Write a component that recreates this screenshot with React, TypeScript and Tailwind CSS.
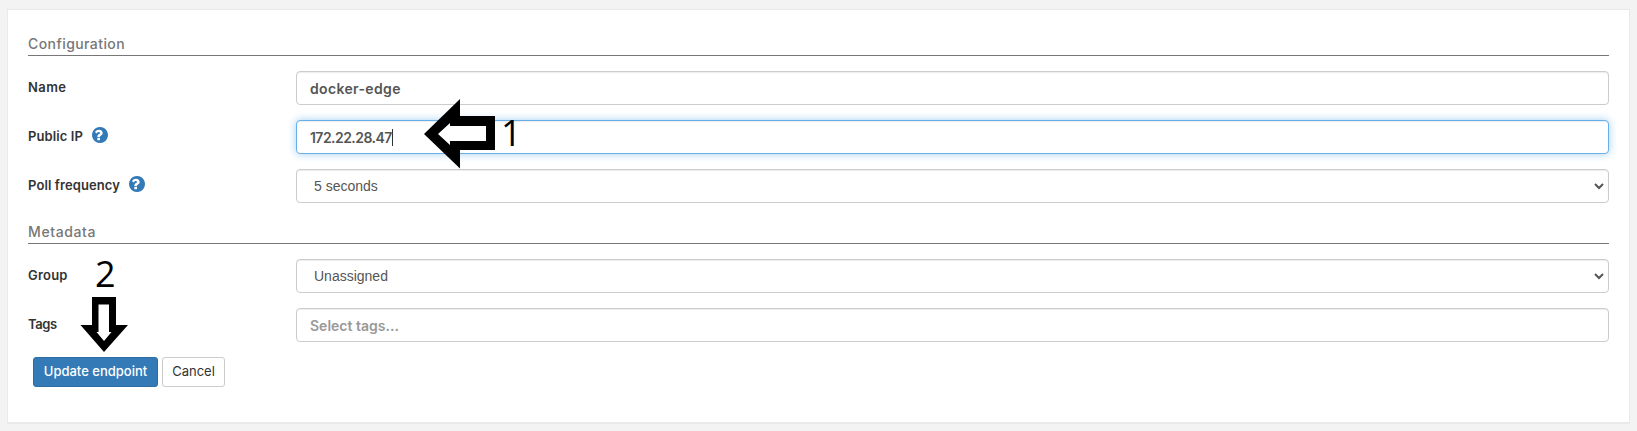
import type { ReactNode } from "react";

const field =
  "h-[34px] w-[1313px] rounded-[4px] border bg-white px-[13px] flex items-center text-[#555] shadow-[inset_0_1px_1px_rgba(0,0,0,0.075)]";

function HelpIcon() {
  return (
    <svg className="mb-[4px] ml-[9px] size-4 shrink-0" viewBox="128 128 1536 1536" fill="#337ab7">
      <path d="M896 1376v-192q0-14-9-23t-23-9h-192q-14 0-23 9t-9 23v192q0 14 9 23t23 9h192q14 0 23-9t9-23zM1152 704q0-88-55.5-163t-138.5-116t-170-41q-243 0-371 213q-15 24 8 42l132 100q7 6 19 6q16 0 25-12q53-68 86-92q34-24 86-24q48 0 85.5 26t37.5 59q0 38-20 61t-68 45q-63 28-115.5 86.5t-52.5 125.5v36q0 14 9 23t23 9h192q14 0 23-9t9-23q0-19 21.5-49.5t54.5-49.5q32-18 49-28.5t46-35t44.5-48t28-60.5t12.5-81zM1664 896q0 209-103 385.5t-279.5 279.5t-385.5 103t-385.5-103t-279.5-279.5t-103-385.5t103-385.5t279.5-279.5t385.5-103t385.5 103t279.5 279.5t103 385.5z" fillRule="evenodd" />
    </svg>
  );
}

function Heading({ children, className }: { children: ReactNode; className: string }) {
  return (
    <div className={`border-b border-[#777] text-[14px] leading-[18px] font-medium text-[#777] ${className}`}>
      {children}
    </div>
  );
}

function Row({ label, spacing, help, children }: { label: string; spacing: string; help?: boolean; children: ReactNode }) {
  return (
    <div className="flex h-[34px] justify-between">
      <div className="flex h-[33px] items-center text-[13px] font-semibold text-[#333]">
        <span className={spacing}>{label}</span>
        {help && <HelpIcon />}
      </div>
      {children}
    </div>
  );
}

function Select({ value }: { value: string }) {
  return (
    <div className={`${field} justify-between border-[#ccc] pr-[4px] pl-[17px] font-['Liberation_Sans',sans-serif] text-[14px]`}>
      <span>{value}</span>
      <svg width="10" height="7" viewBox="0 0 10 7" fill="none" stroke="#555" strokeWidth="2">
        <path d="M1 1l4 4 4-4" />
      </svg>
    </div>
  );
}

export default function App() {
  return (
    <div className="relative h-[431px] w-[1637px] overflow-hidden bg-[#f3f3f3] pt-[9px] pl-[7px] font-['Inter',sans-serif]">
      <div className="h-[415px] w-[1623px] border border-b-2 border-[#e9e9e9] bg-white pt-[25px] pr-5 pl-5">
        <Heading className="h-[21px] tracking-[0.42px]">Configuration</Heading>
        <div className="mt-[15px] flex flex-col gap-[15px]">
          <Row label="Name" spacing="tracking-[0.4px]">
            <div className={`${field} border-[#ccc] text-[14px] font-semibold tracking-[0.35px]`}>docker-edge</div>
          </Row>
          <Row label="Public IP" spacing="tracking-[0.1px]" help>
            <div className="flex h-[34px] w-[1313px] items-center rounded-[4px] border border-[#66afe9] bg-white px-[13px] text-[14px] font-semibold text-[#555] shadow-[inset_0_1px_1px_rgba(0,0,0,0.075),0_0_8px_rgba(102,175,233,0.6)]">
              <span className="tracking-[-0.55px]">172.22.28.47</span>
              <span className="h-[17px] w-px bg-[#333]" />
            </div>
          </Row>
          <Row label="Poll frequency" spacing="tracking-[0.1px]" help>
            <Select value="5 seconds" />
          </Row>
        </div>
        <Heading className="mt-5 h-[21px] tracking-[0.6px]">Metadata</Heading>
        <div className="mt-[15px] flex flex-col gap-[15px]">
          <Row label="Group" spacing="tracking-[0.2px]">
            <Select value="Unassigned" />
          </Row>
          <Row label="Tags" spacing="tracking-[-0.4px]">
            <div className={`${field} border-[#ccc] text-[14px] font-semibold tracking-[0px] text-[#999]`}>Select tags...</div>
          </Row>
        </div>
        <div className="mt-[15px] ml-[5px] flex gap-1">
          <button className="h-[30px] w-[125px] rounded-[3px] border border-[#2e6da4] bg-[#337ab7] text-[13px] font-medium whitespace-nowrap text-white">
            Update endpoint
          </button>
          <button className="h-[30px] w-[63px] rounded-[3px] border border-[#ccc] bg-white text-[13px] text-[#333]">
            Cancel
          </button>
        </div>
      </div>

      <svg className="absolute top-[99px] left-[424px]" width="72" height="70" viewBox="0 0 72 70">
        <path d="M0 35L36 0V17H71V51H36V69.5Z" fill="#000" />
        <path d="M14 35L26 24V27H62V42H26V46Z" fill="#fff" />
      </svg>
      <svg className="absolute top-[297px] left-[80px]" width="48" height="55" viewBox="0 0 48 55">
        <path d="M12 0H36V28H48L24 55L0.5 28H12Z" fill="#000" />
        <path d="M18.5 7.5H29V35H31.5L24 44L16.5 35H18.5Z" fill="#fff" />
      </svg>
      <span className="absolute top-[108px] left-[501px] font-['Open_Sans',sans-serif] text-[36px] leading-[49px] text-black">1</span>
      <span className="absolute top-[249px] left-[95px] font-['Open_Sans',sans-serif] text-[36px] leading-[49px] text-black">2</span>
    </div>
  );
}
